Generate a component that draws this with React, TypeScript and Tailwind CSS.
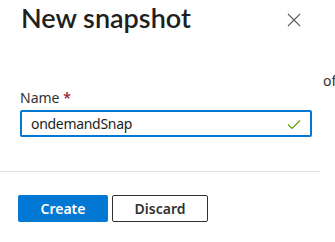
import { useState } from "react";

const font = { fontFamily: '"Noto Sans", "Open Sans", sans-serif' };

export default function App() {
  const [name, setName] = useState("ondemandSnap");

  return (
    <div className="relative w-[335px] h-[242px] bg-white overflow-hidden text-[#323130]" style={font}>
      {/* text peeking from the page behind the panel */}
      <span className="absolute left-[323px] top-[70px] text-[14px] text-[#323130]">of</span>

      <div className="flex flex-col w-[320px] h-full bg-white">
        {/* Header */}
        <div className="flex items-start justify-between pl-[21px] pr-[18px] h-[60px]">
          <h2
            className="text-[27px] font-semibold leading-[36px] text-[#201f1e]"
            style={{ fontFamily: 'Lato, "Noto Sans", sans-serif' }}
          >
            New snapshot
          </h2>
          <button className="mt-[12px] w-[16px] h-[16px] flex items-center justify-center text-[#605e5c]">
            <svg width="14" height="14" viewBox="0 0 14 14" fill="none" stroke="currentColor" strokeWidth="1.1">
              <path d="M1 1 L13 13 M13 1 L1 13" />
            </svg>
          </button>
        </div>

        {/* Body */}
        <div className="flex flex-col pl-[20px] pr-[8px] pt-[28px] h-[111px]">
          <label className="text-[14px] leading-[20px] text-[#323130]">
            Name <span className="text-[#a4262c] font-semibold">*</span>
          </label>
          <div className="mt-[2px] flex items-center h-[27px] w-[292px] border-2 border-[#0078d4] rounded-[2px] px-[9px]">
            <input
              autoFocus
              value={name}
              onChange={(e) => setName(e.target.value)}
              className="flex-1 outline-none text-[14px] tracking-[-0.3px] text-[#201f1e] bg-transparent caret-black"
              style={font}
            />
            <svg width="14" height="14" viewBox="0 0 14 14" fill="none" stroke="#57a300" strokeWidth="1.1">
              <path d="M1 7.5 L5 11.5 L13 3.5" />
            </svg>
          </div>
        </div>

        {/* Footer */}
        <div className="border-t border-[#e1dfdd] flex gap-[4px] pl-[18px] pt-[23px]">
          <button className="w-[90px] h-[27px] rounded-[2px] bg-[#0078d4] text-white text-[14px] font-semibold">
            Create
          </button>
          <button className="w-[96px] h-[27px] rounded-[2px] border border-[#323130] bg-white text-[#323130] text-[14px] font-semibold">
            Discard
          </button>
        </div>
      </div>
    </div>
  );
}
